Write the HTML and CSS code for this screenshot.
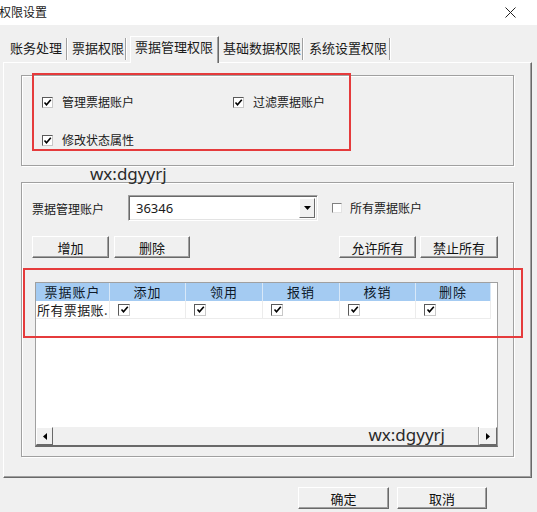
FILE: index.html
```html
<!DOCTYPE html>
<html lang="zh-CN">
<head>
  <meta charset="UTF-8">
  <title>权限设置</title>
  <link rel="stylesheet" href="styles.css">
</head>
<body>
  <div class="window">
    <!-- Title bar -->
    <div class="titlebar">
      <span class="title">权限设置</span>
      <svg class="close" width="11" height="11" viewBox="0 0 11 11">
        <path d="M0.5 0.5 L10.5 10.5 M10.5 0.5 L0.5 10.5" stroke="#222" stroke-width="1" fill="none"/>
      </svg>
    </div>

    <!-- Tab strip -->
    <div class="tabs">
      <div class="tab t1">账务处理</div>
      <div class="tab t2">票据权限</div>
      <div class="tab active">票据管理权限</div>
      <div class="tab t4">基础数据权限</div>
      <div class="tab t5">系统设置权限</div>
    </div>

    <div class="panel">
      <!-- Options -->
      <div class="group g1">
        <div class="opt-row">
          <label class="chk col"><span class="box"><svg viewBox="0 0 9 9"><path d="M1.5 4.5 L3.5 6.8 L7.8 1.8" stroke="#000" stroke-width="1.6" fill="none"/></svg></span>管理票据账户</label>
          <label class="chk"><span class="box"><svg viewBox="0 0 9 9"><path d="M1.5 4.5 L3.5 6.8 L7.8 1.8" stroke="#000" stroke-width="1.6" fill="none"/></svg></span>过滤票据账户</label>
        </div>
        <div class="opt-row">
          <label class="chk col"><span class="box"><svg viewBox="0 0 9 9"><path d="M1.5 4.5 L3.5 6.8 L7.8 1.8" stroke="#000" stroke-width="1.6" fill="none"/></svg></span>修改状态属性</label>
        </div>
        <div class="mark mark1"></div>
      </div>

      <div class="wm">wx:dgyyrj</div>

      <!-- Account rights -->
      <div class="group g2">
        <div class="acct-row">
          <span class="acct-label">票据管理账户</span>
          <div class="combo">
            <span class="combo-val">36346</span>
            <span class="drop"><svg width="7" height="4" viewBox="0 0 7 4"><path d="M0 0 H7 L3.5 4 Z" fill="#000"/></svg></span>
          </div>
          <label class="chk all"><span class="box off"></span>所有票据账户</label>
        </div>

        <div class="btn-row">
          <button class="btn w77">增加</button>
          <button class="btn w76">删除</button>
          <span class="spacer"></span>
          <button class="btn w77">允许所有</button>
          <button class="btn w78">禁止所有</button>
        </div>

        <div class="grid">
          <div class="grid-head">
            <div class="hc c1">票据账户</div>
            <div class="hc c2">添加</div>
            <div class="hc c3">领用</div>
            <div class="hc c4">报销</div>
            <div class="hc c5">核销</div>
            <div class="hc c6">删除</div>
          </div>
          <div class="grid-row">
            <div class="gc c1">所有票据账.</div>
            <div class="gc c2"><span class="box gbox"><svg viewBox="0 0 9 9"><path d="M1.5 4.5 L3.5 6.8 L7.8 1.8" stroke="#000" stroke-width="1.6" fill="none"/></svg></span></div>
            <div class="gc c3"><span class="box gbox"><svg viewBox="0 0 9 9"><path d="M1.5 4.5 L3.5 6.8 L7.8 1.8" stroke="#000" stroke-width="1.6" fill="none"/></svg></span></div>
            <div class="gc c4"><span class="box gbox"><svg viewBox="0 0 9 9"><path d="M1.5 4.5 L3.5 6.8 L7.8 1.8" stroke="#000" stroke-width="1.6" fill="none"/></svg></span></div>
            <div class="gc c5"><span class="box gbox"><svg viewBox="0 0 9 9"><path d="M1.5 4.5 L3.5 6.8 L7.8 1.8" stroke="#000" stroke-width="1.6" fill="none"/></svg></span></div>
            <div class="gc c6"><span class="box gbox"><svg viewBox="0 0 9 9"><path d="M1.5 4.5 L3.5 6.8 L7.8 1.8" stroke="#000" stroke-width="1.6" fill="none"/></svg></span></div>
          </div>
          <div class="grid-body"></div>
          <div class="hscroll">
            <span class="sbtn"><svg width="4" height="7" viewBox="0 0 4 7"><path d="M4 0 V7 L0 3.5 Z" fill="#000"/></svg></span>
            <span class="track">wx:dgyyrj</span>
            <span class="sbtn right"><svg width="4" height="7" viewBox="0 0 4 7"><path d="M0 0 V7 L4 3.5 Z" fill="#000"/></svg></span>
          </div>
        </div>
        <div class="mark mark2"></div>
      </div>
    </div>

    <!-- Dialog buttons -->
    <div class="footer">
      <button class="btn ok">确定</button>
      <button class="btn cancel">取消</button>
    </div>
  </div>
</body>
</html>
```

FILE: styles.css
```css
/* Base */
* {
  margin: 0;
  padding: 0;
  box-sizing: border-box;
}

body {
  background: #f0f0f0;
  font-family: "Noto Sans CJK SC", "Noto Sans", sans-serif;
  font-size: 12px;
  color: #1a1a1a;
}

.window {
  width: 537px;
  height: 512px;
  overflow: hidden;
}

/* Title bar */
.titlebar {
  height: 25px;
  background: #fff;
  display: flex;
  align-items: center;
  justify-content: space-between;
  padding: 0 21px 0 0;
}

.title {
  font-size: 12px;
  line-height: 16px;
  margin-left: -1px;
  margin-top: -2px;
}

.close {
  display: block;
}

/* Tabs */
.tabs {
  height: 37px;
  display: flex;
  align-items: flex-end;
  padding-left: 4px;
}

.tab {
  font-size: 13px;
  height: 22px;
  line-height: 19px;
  border-right: 1px solid #a0a0a0;
  box-shadow: 1px 0 0 #fff;
  margin-bottom: 2px;
}

.t1 { padding: 0 4px 0 6px; }
.t2 { padding: 0 1px 0 5px; margin-right: 4px; }
.t4 { padding: 0 1px 0 4px; }
.t5 { padding: 0 2px 0 6px; }

.tab.active {
  height: 27px;
  line-height: 19px;
  margin-bottom: -1px;
  padding: 0 5px 0 4px;
  background: #f0f0f0;
  border-top: 1px solid #fff;
  border-left: 1px solid #fff;
  border-right: 1px solid #696969;
  box-shadow: inset -1px 0 0 #a0a0a0;
  position: relative;
  z-index: 1;
}

/* Tab page */
.panel {
  width: 529px;
  height: 416px;
  margin-left: 3px;
  border: 1px solid;
  border-color: #fff #696969 #696969 #fff;
  box-shadow: inset -1px -1px 0 #a0a0a0;
  padding: 12px 17px 0 17px;
}

.group {
  border: 1px solid #a0a0a0;
  box-shadow: 1px 1px 0 #fff, inset 1px 1px 0 #fff;
  position: relative;
}

/* Options group */
.g1 {
  height: 91px;
  padding: 18px 0 0 20px;
}

.opt-row {
  display: flex;
  height: 16px;
  margin-bottom: 22px;
}

.chk {
  display: flex;
  align-items: center;
  font-size: 12px;
  line-height: 16px;
}

.chk.col {
  width: 191px;
}

.box {
  width: 11px;
  height: 11px;
  border: 1px solid;
  border-color: #5a5a5a #c8c8c8 #c8c8c8 #5a5a5a;
  background: #fff;
  margin-right: 9px;
  display: flex;
  align-items: center;
  justify-content: center;
}

.box svg {
  width: 9px;
  height: 9px;
}

.box.off {
  width: 10px;
  height: 10px;
  border-color: #808080 #e3e3e3 #e3e3e3 #808080;
  margin-right: 8px;
}

/* Annotation boxes */
.mark {
  position: absolute;
  border: 2px solid #e53b3c;
  pointer-events: none;
}

.mark1 {
  left: 10px;
  top: -3px;
  width: 319px;
  height: 78px;
}

.mark2 {
  left: 1px;
  top: 85px;
  width: 500px;
  height: 70px;
}

.wm {
  height: 16px;
  padding-left: 69px;
  font-family: "Noto Sans", sans-serif;
  font-size: 17px;
  line-height: 16px;
  color: #2a2a2a;
  position: relative;
  z-index: 2;
}

/* Account group */
.g2 {
  height: 275px;
  padding: 12px 15px 0 10px;
}

.acct-row {
  display: flex;
  align-items: center;
  height: 26px;
}

.acct-label {
  width: 96px;
  font-size: 12px;
}

.combo {
  width: 190px;
  height: 26px;
  background: #fff;
  border: 1px solid;
  border-color: #a0a0a0 #fff #fff #a0a0a0;
  box-shadow: inset 1px 1px 0 #696969, inset -1px -1px 0 #e3e3e3;
  display: flex;
  align-items: center;
  justify-content: space-between;
  padding: 2px 2px 2px 7px;
}

.combo-val {
  font-family: "Noto Sans", sans-serif;
  font-size: 13px;
}

.drop {
  width: 16px;
  height: 20px;
  background: #f0f0f0;
  border: 1px solid;
  border-color: #fff #696969 #696969 #fff;
  display: flex;
  align-items: center;
  justify-content: center;
}

.chk.all {
  margin-left: 14px;
}

/* Button row */
.btn-row {
  display: flex;
  margin-top: 15px;
  height: 22px;
  gap: 5px;
}

.spacer {
  flex: 1;
}

.btn {
  font-family: "Noto Sans CJK SC", "Noto Sans", sans-serif;
  font-size: 13px;
  color: #111;
  height: 22px;
  background: #f0f0f0;
  border: 1px solid;
  border-color: #fff #696969 #696969 #fff;
  box-shadow: inset -1px -1px 0 #a0a0a0;
}

.w76 { width: 76px; }
.w77 { width: 77px; }
.w78 { width: 78px; margin-left: -1px; }

/* Rights grid */
.grid {
  margin: 24px 0 0 3px;
  height: 165px;
  background: #fff;
  border: 1px solid #a0a0a0;
  border-bottom: 2px solid #696969;
  display: flex;
  flex-direction: column;
}

.grid-head,
.grid-row {
  display: flex;
  height: 18px;
}

.hc {
  background: #a4cbf2;
  border-right: 1px solid #d8e8f8;
  text-align: center;
  font-size: 13px;
  letter-spacing: 1px;
  line-height: 18px;
  color: #0e1a2a;
}

.c1 { width: 74px; }
.c2 { width: 76px; }
.c3 { width: 77px; }
.c4 { width: 77px; }
.c5 { width: 76px; }
.c6 { width: 75px; }

.gc {
  border-right: 1px solid #ececec;
  border-bottom: 1px solid #ececec;
  display: flex;
  align-items: center;
  padding-left: 8px;
}

.gc.c1 {
  font-size: 13px;
  letter-spacing: 0.4px;
  padding-left: 1px;
  white-space: nowrap;
}

.gbox {
  width: 12px;
  height: 12px;
}

.grid-body {
  flex: 1;
}

/* Horizontal scrollbar */
.hscroll {
  height: 18px;
  display: flex;
  background: #f0f0f0;
}

.sbtn {
  width: 17px;
  border: 1px solid;
  border-color: #fff #696969 #696969 #fff;
  display: flex;
  align-items: center;
  justify-content: center;
}

.sbtn.right {
  width: 18px;
}

.track {
  flex: 1;
  text-align: right;
  padding-right: 33px;
  font-family: "Noto Sans", sans-serif;
  font-size: 17px;
  line-height: 16px;
  color: #2a2a2a;
  border-right: 1px solid #a0a0a0;
}

/* Footer */
.footer {
  display: flex;
  justify-content: flex-end;
  gap: 8px;
  padding-right: 50px;
  margin-top: 9px;
}

.ok { width: 91px; }
.cancel { width: 90px; }
```
